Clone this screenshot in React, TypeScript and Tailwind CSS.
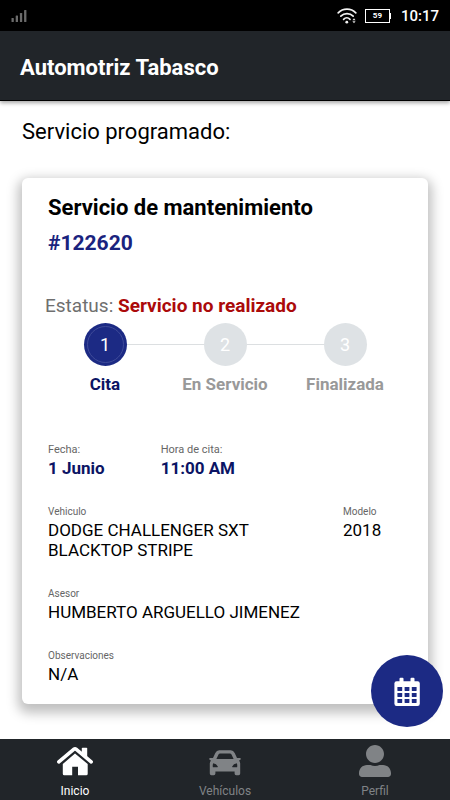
import type { ReactNode } from "react"
import { FaUserAlt } from "react-icons/fa"

const steps = ["Cita", "En Servicio", "Finalizada"]

function StatusBar() {
  return (
    <div className="flex h-[31px] items-center bg-black px-[11px] pt-px text-white">
      <svg className="h-3 w-4" viewBox="0 0 16 12" fill="#6b6b6b" aria-hidden="true">
        <rect x="0.5" y="8" width="2.3" height="4" rx="0.6" />
        <rect x="4.7" y="5.5" width="2.3" height="6.5" rx="0.6" />
        <rect x="8.9" y="3" width="2.3" height="9" rx="0.6" />
        <rect x="13.1" y="0" width="2.3" height="12" rx="0.6" />
      </svg>
      <div className="ml-auto flex items-center">
        <svg className="mr-2 h-4 w-5" viewBox="0 0 20 16" fill="none" stroke="#f2f2f2" strokeWidth="1.7" strokeLinecap="round" aria-hidden="true">
          <path d="M1.2 4.8C6 -0.1 14 -0.1 18.8 4.8" />
          <path d="M3.8 8.2C7.2 4.8 12.8 4.8 16.2 8.2" />
          <path d="M6.6 11.3C8.4 9.5 11.2 9.5 13 11.3" />
          <circle cx="9.8" cy="14.2" r="1.4" fill="#f2f2f2" stroke="none" />
          <path d="M17 10.2L18.6 12.2H15.4ZM17 15.2L15.4 13.2H18.6Z" fill="#ddd" stroke="none" />
        </svg>
        <div className="flex h-[14px] w-[25px] items-center justify-center border border-white text-[8px] font-bold leading-none">59</div>
        <div className="mr-2.5 h-1.5 w-px bg-white" />
        <span className="text-[15px] font-medium leading-none">10:17</span>
      </div>
    </div>
  )
}

function HomeIcon() {
  return (
    <svg className="h-9 w-[50px]" viewBox="0 0 50 36" fill="currentColor" aria-hidden="true">
      <path d="M31.8 5.4Q31.8 4.7 32.5 4.7H36.5Q37.2 4.7 37.2 5.4V15L31.8 10.4Z" />
      <path d="M8.8 18.9L24 6.2Q25 5.4 26 6.2L41.2 18.9" fill="none" stroke="currentColor" strokeWidth="3.6" strokeLinecap="round" strokeLinejoin="round" />
      <path d="M25 10.4L37.7 21V30.8Q37.7 32.3 36.2 32.3H28V23.8H22.2V32.3H14.3Q12.8 32.3 12.8 30.8V21Z" />
    </svg>
  )
}

function CarIcon() {
  return (
    <svg className="h-9 w-[50px]" viewBox="-2 0 50 36" fill="currentColor" fillRule="evenodd" aria-hidden="true">
      <path d="M17.2 7.3H28.8Q31.4 7.3 32.7 9.9L35 14.9H38Q39 15 38.7 16.2Q38.4 17.3 37 17.4Q38.2 18.7 38.2 20.5V30.6Q38.2 32.2 36.6 32.2H34.2Q32.6 32.2 32.6 30.6V28.6H13.4V30.6Q13.4 32.2 11.8 32.2H9.4Q7.8 32.2 7.8 30.6V20.5Q7.8 18.7 9 17.4Q7.6 17.3 7.3 16.2Q7 15 8 14.9H11L13.3 9.9Q14.6 7.3 17.2 7.3ZM18.1 10.5Q17 10.5 16.5 11.5L14.4 16.1H31.6L29.5 11.5Q29 10.5 27.9 10.5ZM11.2 20.3Q10.4 22.2 10.9 24.3H15.4Q16.1 24.3 15.8 23.4Q14.5 20.6 11.2 20.3ZM34.8 20.3Q31.5 20.6 30.2 23.4Q29.9 24.3 30.6 24.3H35.1Q35.6 22.2 34.8 20.3Z" />
    </svg>
  )
}

function CalendarIcon() {
  return (
    <svg className="size-10" viewBox="0 0 40 40" aria-hidden="true">
      <rect x="7.4" y="10.3" width="25.4" height="24.6" rx="2.2" fill="white" />
      <rect x="12.5" y="6.8" width="4" height="6" rx="1" fill="white" />
      <rect x="23.5" y="6.8" width="4" height="6" rx="1" fill="white" />
      <g fill="#1c2a84">
        {[16, 22, 28].map((y) =>
          [10.4, 17.6, 24.8].map((x) => <rect key={`${x}-${y}`} x={x} y={y} width="4.8" height="3.9" rx="0.4" />)
        )}
      </g>
    </svg>
  )
}

function Stepper() {
  return (
    <ol className="grid grid-cols-3">
      {steps.map((step, i) => (
        <li key={step} className="flex flex-col items-center">
          <div className="flex w-full items-center">
            <div className={i === 0 ? "h-px flex-1" : "h-px flex-1 bg-[#dcdfe1]"} />
            <div
              className={
                i === 0
                  ? "flex size-[43px] items-center justify-center rounded-full bg-[#1c2a84] p-[3px] text-white"
                  : "flex size-[43px] items-center justify-center rounded-full bg-[#dee2e5] p-[3px] text-white"
              }
            >
              <span
                className={
                  i === 0
                    ? "flex size-full items-center justify-center rounded-full border border-[#3f4b99] text-lg leading-none"
                    : "text-lg leading-none"
                }
              >
                {i + 1}
              </span>
            </div>
            <div className={i === 2 ? "h-px flex-1" : "h-px flex-1 bg-[#dcdfe1]"} />
          </div>
          <span className={i === 0 ? "mt-2 text-[17px] font-bold leading-5 text-[#0b1464]" : "mt-2 text-[17px] font-bold leading-5 text-[#999]"}>
            {step}
          </span>
        </li>
      ))}
    </ol>
  )
}

function Field({ label, children }: { label: string; children: ReactNode }) {
  return (
    <div>
      <dt className="text-[10px] leading-3 text-[#666]">{label}</dt>
      <dd className="mt-0.5 text-[17px] leading-5 text-black">{children}</dd>
    </div>
  )
}

function ServiceCard() {
  return (
    <section className="mt-8 rounded-md bg-white px-[26px] pt-[17px] pb-5 shadow-[0_5px_12px_4px_rgba(0,0,0,0.25)]">
      <h3 className="text-[22px] font-bold leading-[26px] text-black">Servicio de mantenimiento</h3>
      <p className="mt-2 text-[21px] font-bold leading-7 text-[#1a237e]">#122620</p>

      <p className="-mx-[3px] mt-[39px] text-[19px] leading-5 text-[#6f6f6f]">
        Estatus: <strong className="font-bold text-[#ab0a0a]">Servicio no realizado</strong>
      </p>
      <div className="-mx-[3px] mt-[7px]">
        <Stepper />
      </div>

      <dl className="mt-[50px] flex gap-14">
        <div>
          <dt className="text-[11px] leading-3 text-[#666]">Fecha:</dt>
          <dd className="mt-0.5 text-[17px] font-bold leading-5 text-[#0b1464]">1 Junio</dd>
        </div>
        <div>
          <dt className="text-[11px] leading-3 text-[#666]">Hora de cita:</dt>
          <dd className="mt-0.5 text-[17px] font-bold leading-5 text-[#0b1464]">11:00 AM</dd>
        </div>
      </dl>

      <dl className="mt-7 grid grid-cols-[5fr_1fr] gap-y-7">
        <Field label="Vehiculo">
          DODGE CHALLENGER SXT
          <br />
          BLACKTOP STRIPE
        </Field>
        <Field label="Modelo">2018</Field>
        <div className="col-span-2">
          <Field label="Asesor">HUMBERTO ARGUELLO JIMENEZ</Field>
        </div>
        <div className="col-span-2">
          <Field label="Observaciones">N/A</Field>
        </div>
      </dl>
    </section>
  )
}

function BottomNav() {
  return (
    <nav className="grid h-[61px] grid-cols-3 bg-[#212529] text-xs leading-4 text-[#808386]">
      <a href="#inicio" aria-current="page" className="flex flex-col items-center pt-1 text-white">
        <HomeIcon />
        <span className="mt-1">Inicio</span>
      </a>
      <a href="#vehiculos" className="flex flex-col items-center pt-1">
        <CarIcon />
        <span className="mt-1">Vehículos</span>
      </a>
      <a href="#perfil" className="flex flex-col items-center pt-1">
        <FaUserAlt className="my-0.5 size-8" />
        <span className="mt-1">Perfil</span>
      </a>
    </nav>
  )
}

export default function App() {
  return (
    <div className="flex min-h-screen flex-col bg-white font-[Roboto,sans-serif]">
      <StatusBar />
      <header className="flex h-[70px] items-center border-b border-black bg-[#212529] px-5 pt-1 shadow-[0_2px_4px_rgba(0,0,0,0.35)]">
        <h1 className="text-[22px] font-bold leading-7 text-white">Automotriz Tabasco</h1>
      </header>

      <main className="relative grow px-[22px] pt-[17px]">
        <h2 className="text-[22px] leading-7 text-black">Servicio programado:</h2>
        <ServiceCard />
        <button
          type="button"
          aria-label="Agendar cita"
          className="absolute right-[7px] bottom-3 flex size-[72px] items-center justify-center rounded-full bg-[#1c2a84]"
        >
          <CalendarIcon />
        </button>
      </main>

      <BottomNav />
    </div>
  )
}
